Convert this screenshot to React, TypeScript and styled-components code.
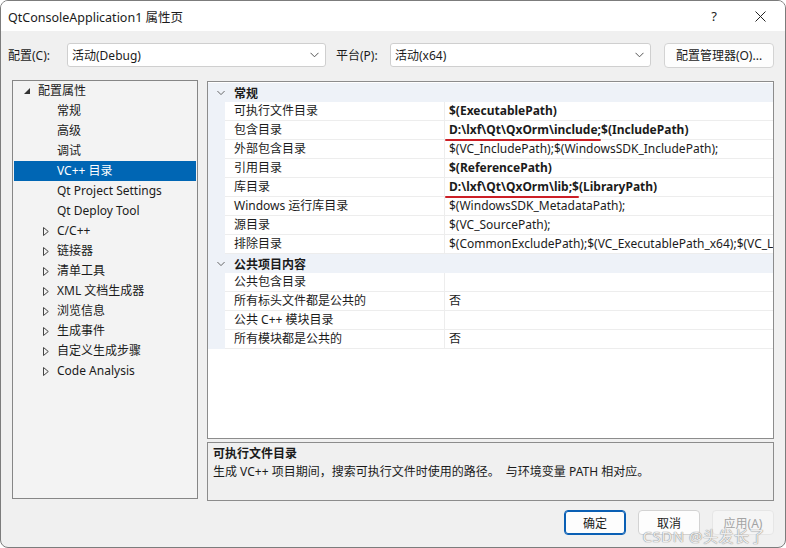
import * as React from "react"
import styled, { createGlobalStyle, css } from "styled-components"

const GlobalStyle = createGlobalStyle`
  html, body {
    margin: 0;
    padding: 0;
    background: #ffffff;
  }
  body {
    font-family: "Noto Sans", "Noto Sans CJK SC", sans-serif;
    font-size: 12px;
    color: #1b1b1b;
  }
  * {
    box-sizing: border-box;
  }
`

const Window = styled.div`
  position: relative;
  width: 786px;
  height: 548px;
  border: 1px solid #7c7c7c;
  border-radius: 8px;
  overflow: hidden;
  background: #f0f0f0;
  display: flex;
  flex-direction: column;
`

const TitleBar = styled.div`
  height: 30px;
  background: #ffffff;
  display: flex;
  align-items: center;
  padding-left: 7px;
  padding-right: 2px;
`

const Title = styled.div`
  flex: 1;
  font-size: 12.5px;
`

const CaptionButton = styled.div`
  width: 46px;
  height: 30px;
  display: flex;
  align-items: center;
  justify-content: center;
  font-size: 13px;
  color: #222;
`

const ConfigRow = styled.div`
  display: flex;
  align-items: center;
  height: 24px;
  margin-top: 12px;
  padding: 0 11px 0 7px;
`

const FieldLabel = styled.span<{ $width: number }>`
  width: ${p => p.$width}px;
  flex-shrink: 0;
  white-space: nowrap;
`

const Select = styled.div<{ $width: number }>`
  width: ${p => p.$width}px;
  height: 24px;
  background: #ffffff;
  border: 1px solid #cfcfcf;
  border-radius: 3px;
  display: flex;
  align-items: center;
  padding: 0 6px 0 4px;
  margin-right: 10px;
  span {
    flex: 1;
  }
`

const Button = styled.div<{ $variant?: "default" | "primary" | "disabled" }>`
  height: 25px;
  min-width: 62px;
  padding: 0 8px;
  display: flex;
  align-items: center;
  justify-content: center;
  background: #fdfdfd;
  border: 1px solid #d3d3d3;
  border-radius: 4px;
  white-space: nowrap;
  ${p =>
    p.$variant === "primary" &&
    css`
      border: 1px solid #0a5fb4;
      box-shadow: inset 0 0 0 1px #0a5fb4;
    `}
  ${p =>
    p.$variant === "disabled" &&
    css`
      background: #f5f5f5;
      border-color: #e6e6e6;
      color: #a3a3a3;
    `}
`

const Main = styled.div`
  display: grid;
  grid-template-columns: 186px minmax(0, 1fr);
  column-gap: 9px;
  margin-top: 13px;
  padding: 0 11px 0 11px;
`

const Tree = styled.div`
  height: 419px;
  border: 1px solid #868686;
  background: #f3f3f3;
  padding: 0 1px;
`

const TreeRow = styled.div<{ $level: number; $selected?: boolean }>`
  height: 20px;
  line-height: 20px;
  display: flex;
  align-items: center;
  padding-left: ${p => (p.$level === 0 ? 10 : 29)}px;
  white-space: nowrap;
  background: ${p => (p.$selected ? "#0066b4" : "transparent")};
  color: ${p => (p.$selected ? "#ffffff" : "#1b1b1b")};
`

const Twisty = styled.span<{ $width?: number }>`
  width: ${p => p.$width ?? 14}px;
  height: 19px;
  display: inline-flex;
  align-items: center;
  justify-content: ${p => (p.$width ? "center" : "flex-start")};
  flex-shrink: 0;
`

const RightColumn = styled.div`
  display: flex;
  flex-direction: column;
  gap: 3px;
  margin-top: 1px;
  min-width: 0;
`

const Grid = styled.div`
  height: 358px;
  border: 1px solid #8c8c8c;
  background: #ffffff;
  overflow: hidden;
  padding-top: 1px;
  min-width: 0;
`

const CategoryRow = styled.div`
  height: 19px;
  display: grid;
  grid-template-columns: 17px minmax(0, 1fr);
  align-items: center;
  background: #eef2f8;
  font-weight: 700;
  span {
    padding-left: 9px;
  }
`

const PropRow = styled.div`
  height: 19px;
  display: grid;
  grid-template-columns: 17px 219px minmax(0, 1fr);
  background: #ffffff;
`

const Gutter = styled.div`
  background: #eef2f8;
`

const NameCell = styled.div`
  padding-left: 9px;
  line-height: 18px;
  border-bottom: 1px solid #ededed;
  white-space: nowrap;
  overflow: hidden;
`

const ValueCell = styled.div<{ $bold?: boolean }>`
  padding-left: 4px;
  line-height: 18px;
  border-bottom: 1px solid #ededed;
  border-left: 1px solid #ededed;
  white-space: nowrap;
  font-weight: ${p => (p.$bold ? 700 : 400)};
`

const Marked = styled.span`
  position: relative;
  &::after {
    content: "";
    position: absolute;
    left: -4px;
    right: 0;
    bottom: -3px;
    height: 2px;
    border-radius: 1px;
    background: #cc1f26;
  }
`

const Description = styled.div`
  height: 59px;
  border: 1px solid #8c8c8c;
  background: #f0f0f0;
  padding: 2px 5px;
  line-height: 18px;
`

const DescTitle = styled.div`
  font-weight: 700;
`

const Footer = styled.div`
  display: flex;
  justify-content: flex-end;
  gap: 12px;
  margin-top: 9px;
  padding-right: 11px;
`

const Watermark = styled.div`
  position: absolute;
  right: 20px;
  bottom: 1px;
  font-size: 15px;
  color: rgba(255, 255, 255, 0.85);
  text-shadow: 0 0 1px #8a8a8a, 0 0 1px #8a8a8a;
  letter-spacing: 0.5px;
`

const Chevron = () => (
  <svg width="9" height="6" viewBox="0 0 9 6">
    <polyline points="0.5,0.8 4.5,4.8 8.5,0.8" fill="none" stroke="#555" strokeWidth="1" />
  </svg>
)

const Expanded = () => (
  <svg width="6" height="6" viewBox="0 0 6 6">
    <polygon points="6,0 6,6 0,6" fill="#333" />
  </svg>
)

const Collapsed = () => (
  <svg width="6" height="9" viewBox="0 0 6 9">
    <polygon points="0.5,0.5 5.3,4.5 0.5,8.5" fill="none" stroke="#444" strokeWidth="1" />
  </svg>
)

const CloseIcon = () => (
  <svg width="11" height="11" viewBox="0 0 11 11">
    <path d="M0.5 0.5 L10.5 10.5 M10.5 0.5 L0.5 10.5" stroke="#222" strokeWidth="1" />
  </svg>
)

type TreeItem = { label: string; level: number; expand?: "open" | "closed"; selected?: boolean }

const treeItems: TreeItem[] = [
  { label: "配置属性", level: 0, expand: "open" },
  { label: "常规", level: 1 },
  { label: "高级", level: 1 },
  { label: "调试", level: 1 },
  { label: "VC++ 目录", level: 1, selected: true },
  { label: "Qt Project Settings", level: 1 },
  { label: "Qt Deploy Tool", level: 1 },
  { label: "C/C++", level: 1, expand: "closed" },
  { label: "链接器", level: 1, expand: "closed" },
  { label: "清单工具", level: 1, expand: "closed" },
  { label: "XML 文档生成器", level: 1, expand: "closed" },
  { label: "浏览信息", level: 1, expand: "closed" },
  { label: "生成事件", level: 1, expand: "closed" },
  { label: "自定义生成步骤", level: 1, expand: "closed" },
  { label: "Code Analysis", level: 1, expand: "closed" },
]

type Prop = { name: string; value: React.ReactNode; bold?: boolean }

const general: Prop[] = [
  { name: "可执行文件目录", value: "$(ExecutablePath)", bold: true },
  {
    name: "包含目录",
    value: (
      <>
        <Marked>D:\lxf\Qt\QxOrm\include;</Marked>$(IncludePath)
      </>
    ),
    bold: true,
  },
  { name: "外部包含目录", value: "$(VC_IncludePath);$(WindowsSDK_IncludePath);" },
  { name: "引用目录", value: "$(ReferencePath)", bold: true },
  {
    name: "库目录",
    value: (
      <>
        <Marked>D:\lxf\Qt\QxOrm\lib;$</Marked>(LibraryPath)
      </>
    ),
    bold: true,
  },
  { name: "Windows 运行库目录", value: "$(WindowsSDK_MetadataPath);" },
  { name: "源目录", value: "$(VC_SourcePath);" },
  {
    name: "排除目录",
    value: "$(CommonExcludePath);$(VC_ExecutablePath_x64);$(VC_LibraryPath_x64)",
  },
]

const publicItems: Prop[] = [
  { name: "公共包含目录", value: "" },
  { name: "所有标头文件都是公共的", value: "否" },
  { name: "公共 C++ 模块目录", value: "" },
  { name: "所有模块都是公共的", value: "否" },
]

const Category = ({ title, items }: { title: string; items: Prop[] }) => (
  <>
    <CategoryRow>
      <Twisty $width={17}>
        <Chevron />
      </Twisty>
      <span>{title}</span>
    </CategoryRow>
    {items.map(p => (
      <PropRow key={p.name}>
        <Gutter />
        <NameCell>{p.name}</NameCell>
        <ValueCell $bold={p.bold}>{p.value}</ValueCell>
      </PropRow>
    ))}
  </>
)

const App = () => (
  <>
    <GlobalStyle />
    <Window>
      <TitleBar>
        <Title>QtConsoleApplication1 属性页</Title>
        <CaptionButton>?</CaptionButton>
        <CaptionButton>
          <CloseIcon />
        </CaptionButton>
      </TitleBar>

      <ConfigRow>
        <FieldLabel $width={59}>配置(C):</FieldLabel>
        <Select $width={259}>
          <span>活动(Debug)</span>
          <Chevron />
        </Select>
        <FieldLabel $width={54}>平台(P):</FieldLabel>
        <Select $width={261}>
          <span>活动(x64)</span>
          <Chevron />
        </Select>
        <Button style={{ marginLeft: "auto", width: 110 }}>配置管理器(O)...</Button>
      </ConfigRow>

      <Main>
        <Tree>
          {treeItems.map(item => (
            <TreeRow key={item.label} $level={item.level} $selected={item.selected}>
              <Twisty>
                {item.expand === "open" && <Expanded />}
                {item.expand === "closed" && <Collapsed />}
              </Twisty>
              {item.label}
            </TreeRow>
          ))}
        </Tree>

        <RightColumn>
          <Grid>
            <Category title="常规" items={general} />
            <Category title="公共项目内容" items={publicItems} />
          </Grid>
          <Description>
            <DescTitle>可执行文件目录</DescTitle>
            <div>生成 VC++ 项目期间，搜索可执行文件时使用的路径。&nbsp;&nbsp;与环境变量 PATH 相对应。</div>
          </Description>
        </RightColumn>
      </Main>

      <Footer>
        <Button $variant="primary">确定</Button>
        <Button>取消</Button>
        <Button $variant="disabled">应用(A)</Button>
      </Footer>

      <Watermark>CSDN @头发长了</Watermark>
    </Window>
  </>
)

export default App
